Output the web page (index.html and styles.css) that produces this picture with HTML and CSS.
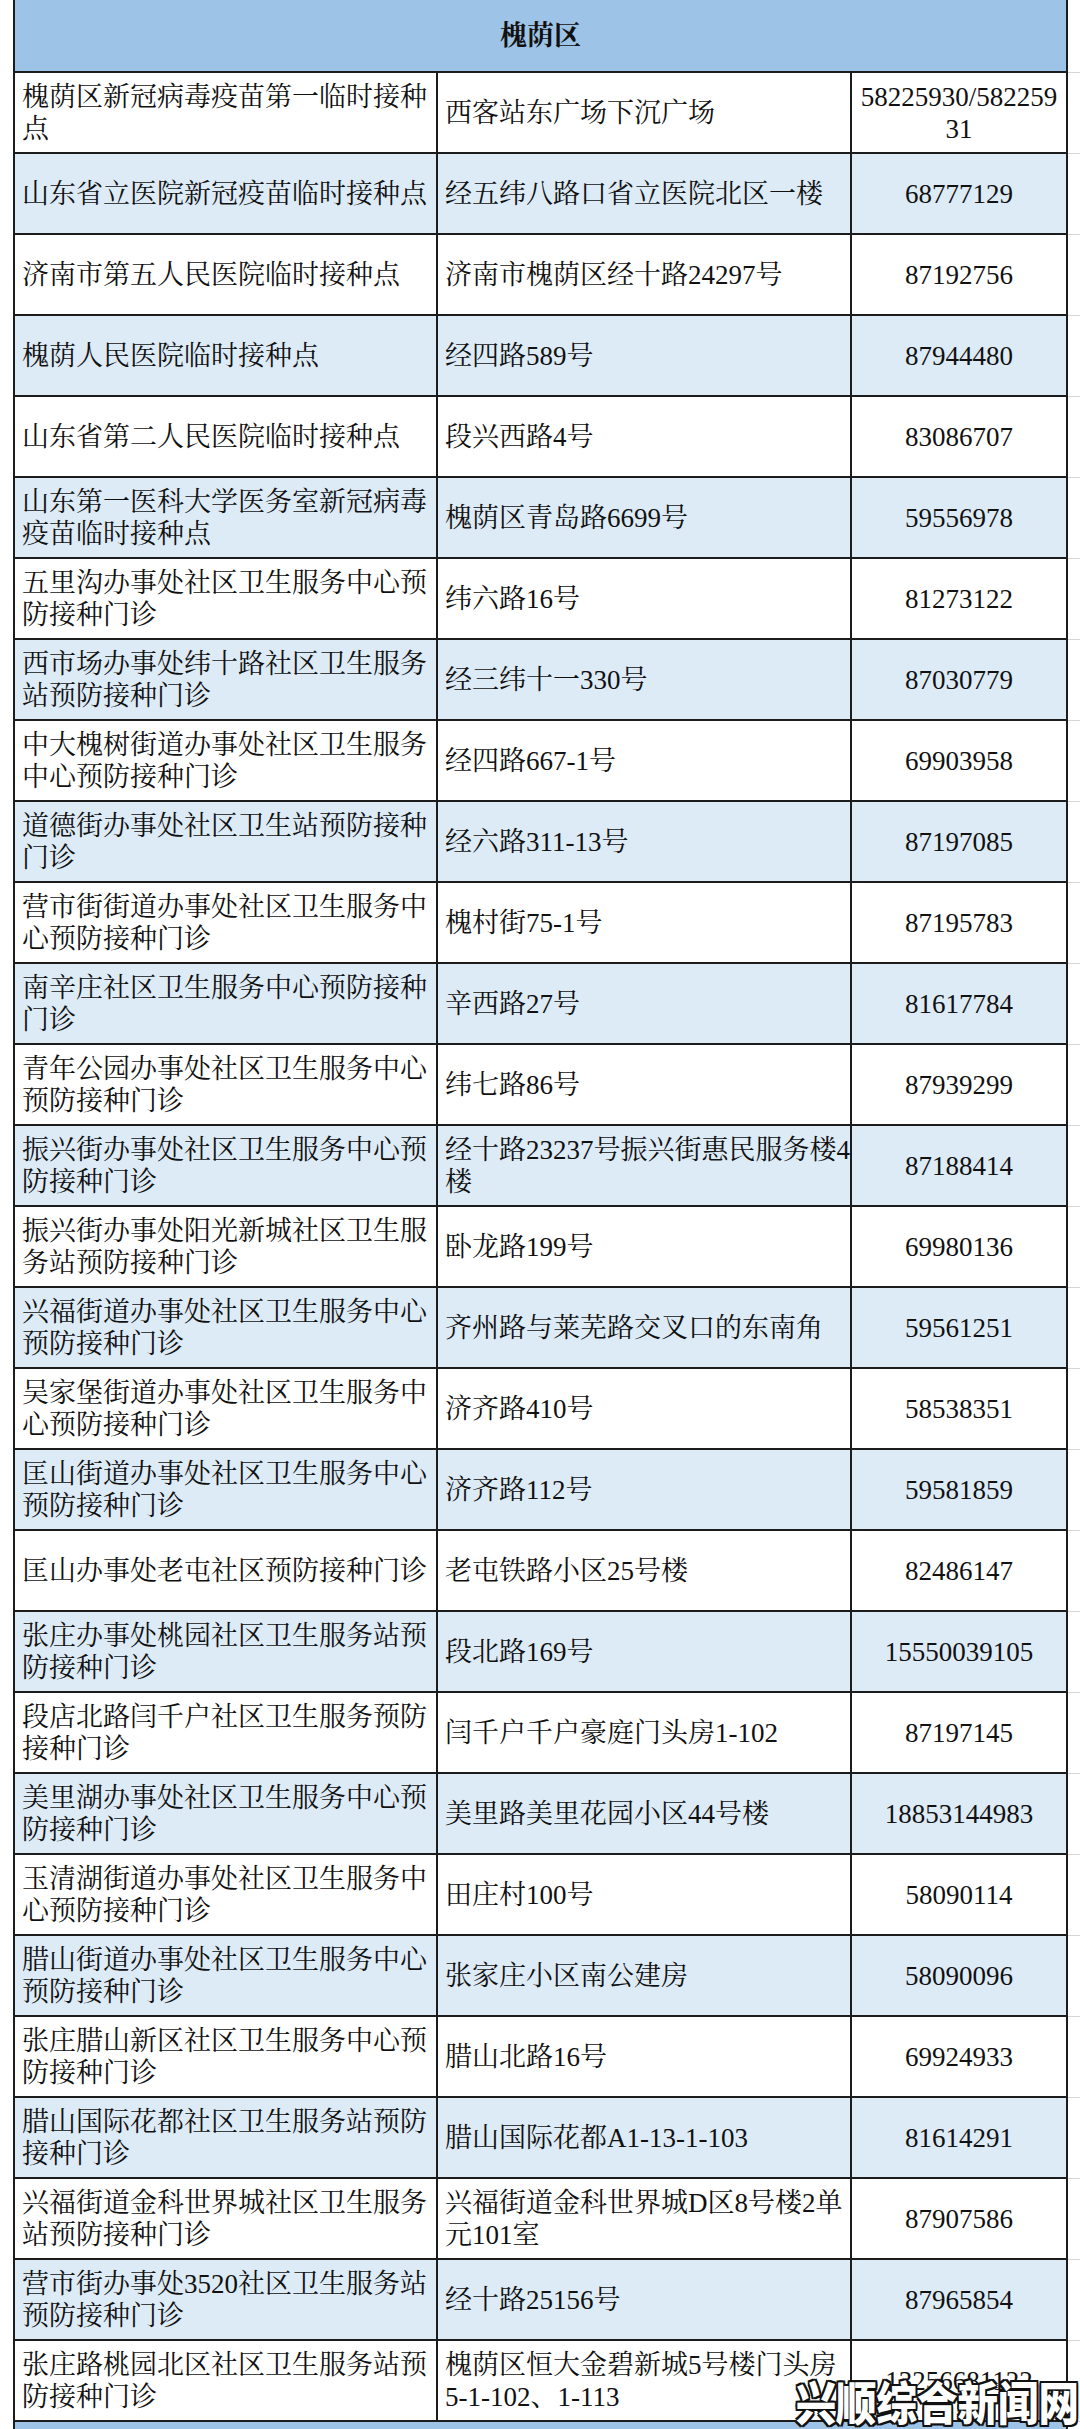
FILE: index.html
```
<!DOCTYPE html>
<html lang="zh-CN">
<head>
<meta charset="utf-8">
<title>槐荫区接种点</title>
<link rel="stylesheet" href="styles.css">
</head>
<body>
<div class="page">
<table class="sheet">
<colgroup>
<col class="c-name"><col class="c-addr"><col class="c-tel"><col class="c-ext">
</colgroup>
<thead>
<tr class="head"><th colspan="3">槐荫区</th><td class="ext"></td></tr>
</thead>
<tbody>
<tr class="odd"><td class="name">槐荫区新冠病毒疫苗第一临时接种<br>点</td><td class="addr">西客站东广场下沉广场</td><td class="tel">58225930/582259<br>31</td><td class="ext"></td></tr>
<tr class="even"><td class="name">山东省立医院新冠疫苗临时接种点</td><td class="addr">经五纬八路口省立医院北区一楼</td><td class="tel">68777129</td><td class="ext"></td></tr>
<tr class="odd"><td class="name">济南市第五人民医院临时接种点</td><td class="addr">济南市槐荫区经十路24297号</td><td class="tel">87192756</td><td class="ext"></td></tr>
<tr class="even"><td class="name">槐荫人民医院临时接种点</td><td class="addr">经四路589号</td><td class="tel">87944480</td><td class="ext"></td></tr>
<tr class="odd"><td class="name">山东省第二人民医院临时接种点</td><td class="addr">段兴西路4号</td><td class="tel">83086707</td><td class="ext"></td></tr>
<tr class="even"><td class="name">山东第一医科大学医务室新冠病毒<br>疫苗临时接种点</td><td class="addr">槐荫区青岛路6699号</td><td class="tel">59556978</td><td class="ext"></td></tr>
<tr class="odd"><td class="name">五里沟办事处社区卫生服务中心预<br>防接种门诊</td><td class="addr">纬六路16号</td><td class="tel">81273122</td><td class="ext"></td></tr>
<tr class="even"><td class="name">西市场办事处纬十路社区卫生服务<br>站预防接种门诊</td><td class="addr">经三纬十一330号</td><td class="tel">87030779</td><td class="ext"></td></tr>
<tr class="odd"><td class="name">中大槐树街道办事处社区卫生服务<br>中心预防接种门诊</td><td class="addr">经四路667-1号</td><td class="tel">69903958</td><td class="ext"></td></tr>
<tr class="even"><td class="name">道德街办事处社区卫生站预防接种<br>门诊</td><td class="addr">经六路311-13号</td><td class="tel">87197085</td><td class="ext"></td></tr>
<tr class="odd"><td class="name">营市街街道办事处社区卫生服务中<br>心预防接种门诊</td><td class="addr">槐村街75-1号</td><td class="tel">87195783</td><td class="ext"></td></tr>
<tr class="even"><td class="name">南辛庄社区卫生服务中心预防接种<br>门诊</td><td class="addr">辛西路27号</td><td class="tel">81617784</td><td class="ext"></td></tr>
<tr class="odd"><td class="name">青年公园办事处社区卫生服务中心<br>预防接种门诊</td><td class="addr">纬七路86号</td><td class="tel">87939299</td><td class="ext"></td></tr>
<tr class="even"><td class="name">振兴街办事处社区卫生服务中心预<br>防接种门诊</td><td class="addr">经十路23237号振兴街惠民服务楼4<br>楼</td><td class="tel">87188414</td><td class="ext"></td></tr>
<tr class="odd"><td class="name">振兴街办事处阳光新城社区卫生服<br>务站预防接种门诊</td><td class="addr">卧龙路199号</td><td class="tel">69980136</td><td class="ext"></td></tr>
<tr class="even"><td class="name">兴福街道办事处社区卫生服务中心<br>预防接种门诊</td><td class="addr">齐州路与莱芜路交叉口的东南角</td><td class="tel">59561251</td><td class="ext"></td></tr>
<tr class="odd"><td class="name">吴家堡街道办事处社区卫生服务中<br>心预防接种门诊</td><td class="addr">济齐路410号</td><td class="tel">58538351</td><td class="ext"></td></tr>
<tr class="even"><td class="name">匡山街道办事处社区卫生服务中心<br>预防接种门诊</td><td class="addr">济齐路112号</td><td class="tel">59581859</td><td class="ext"></td></tr>
<tr class="odd"><td class="name">匡山办事处老屯社区预防接种门诊</td><td class="addr">老屯铁路小区25号楼</td><td class="tel">82486147</td><td class="ext"></td></tr>
<tr class="even"><td class="name">张庄办事处桃园社区卫生服务站预<br>防接种门诊</td><td class="addr">段北路169号</td><td class="tel">15550039105</td><td class="ext"></td></tr>
<tr class="odd"><td class="name">段店北路闫千户社区卫生服务预防<br>接种门诊</td><td class="addr">闫千户千户豪庭门头房1-102</td><td class="tel">87197145</td><td class="ext"></td></tr>
<tr class="even"><td class="name">美里湖办事处社区卫生服务中心预<br>防接种门诊</td><td class="addr">美里路美里花园小区44号楼</td><td class="tel">18853144983</td><td class="ext"></td></tr>
<tr class="odd"><td class="name">玉清湖街道办事处社区卫生服务中<br>心预防接种门诊</td><td class="addr">田庄村100号</td><td class="tel">58090114</td><td class="ext"></td></tr>
<tr class="even"><td class="name">腊山街道办事处社区卫生服务中心<br>预防接种门诊</td><td class="addr">张家庄小区南公建房</td><td class="tel">58090096</td><td class="ext"></td></tr>
<tr class="odd"><td class="name">张庄腊山新区社区卫生服务中心预<br>防接种门诊</td><td class="addr">腊山北路16号</td><td class="tel">69924933</td><td class="ext"></td></tr>
<tr class="even"><td class="name">腊山国际花都社区卫生服务站预防<br>接种门诊</td><td class="addr">腊山国际花都A1-13-1-103</td><td class="tel">81614291</td><td class="ext"></td></tr>
<tr class="odd"><td class="name">兴福街道金科世界城社区卫生服务<br>站预防接种门诊</td><td class="addr">兴福街道金科世界城D区8号楼2单<br>元101室</td><td class="tel">87907586</td><td class="ext"></td></tr>
<tr class="even"><td class="name">营市街办事处3520社区卫生服务站<br>预防接种门诊</td><td class="addr">经十路25156号</td><td class="tel">87965854</td><td class="ext"></td></tr>
<tr class="odd"><td class="name">张庄路桃园北区社区卫生服务站预<br>防接种门诊</td><td class="addr">槐荫区恒大金碧新城5号楼门头房<br>5-1-102、1-113</td><td class="tel">13256681122</td><td class="ext"></td></tr>
<tr class="next"><td colspan="3"></td><td class="ext"></td></tr>
</tbody>
</table>
<div class="watermark">兴顺综合新闻网</div>
</div>
</body>
</html>
```
FILE: styles.css
```
html, body {
  margin: 0;
  padding: 0;
  background: #ffffff;
  height: 2429px;
  overflow: hidden;
}

.page {
  position: relative;
  width: 1080px;
  height: 2429px;
  overflow: hidden;
}

.sheet {
  margin-left: 13px;
  border-collapse: collapse;
  table-layout: fixed;
  width: 1067px;
  font-family: "Liberation Serif", "Noto Serif CJK SC", "Noto Sans CJK SC", serif;
  font-size: 27px;
  line-height: 32px;
  color: #111111;
}

.c-name { width: 423px; }
.c-addr { width: 414px; }
.c-tel { width: 216px; }
.c-ext { width: 14px; }

.sheet th,
.sheet td {
  border: 2px solid #1c1c1c;
  padding: 0 0 0 7px;
  vertical-align: middle;
  white-space: nowrap;
  overflow: hidden;
  text-align: left;
}

.head {
  height: 72px;
}

.head th {
  background: #9dc3e6;
  border-top: none;
  text-align: center;
  font-weight: bold;
  padding: 0;
}

.sheet tbody tr {
  height: 81px;
}

.odd td { background: #ffffff; }
.even td { background: #ddebf7; }
.next td { background: #9dc3e6; }

.sheet td.tel {
  text-align: center;
  padding: 0;
}

.sheet td.ext {
  background: #ffffff;
  border-top: none;
  border-right: none;
  border-left: none;
  border-bottom: 1px solid #d6d6d6;
  padding: 0;
}

.watermark {
  position: absolute;
  right: 1px;
  bottom: 5px;
  font-family: "Noto Sans CJK SC", sans-serif;
  font-weight: 900;
  font-size: 46px;
  line-height: 48px;
  color: #ffffff;
  transform: scaleX(0.88);
  transform-origin: right bottom;
  white-space: nowrap;
  text-shadow:
    2px 0 0 #111, -2px 0 0 #111, 0 2px 0 #111, 0 -2px 0 #111,
    2px 2px 0 #111, -2px -2px 0 #111, 2px -2px 0 #111, -2px 2px 0 #111;
}
```
